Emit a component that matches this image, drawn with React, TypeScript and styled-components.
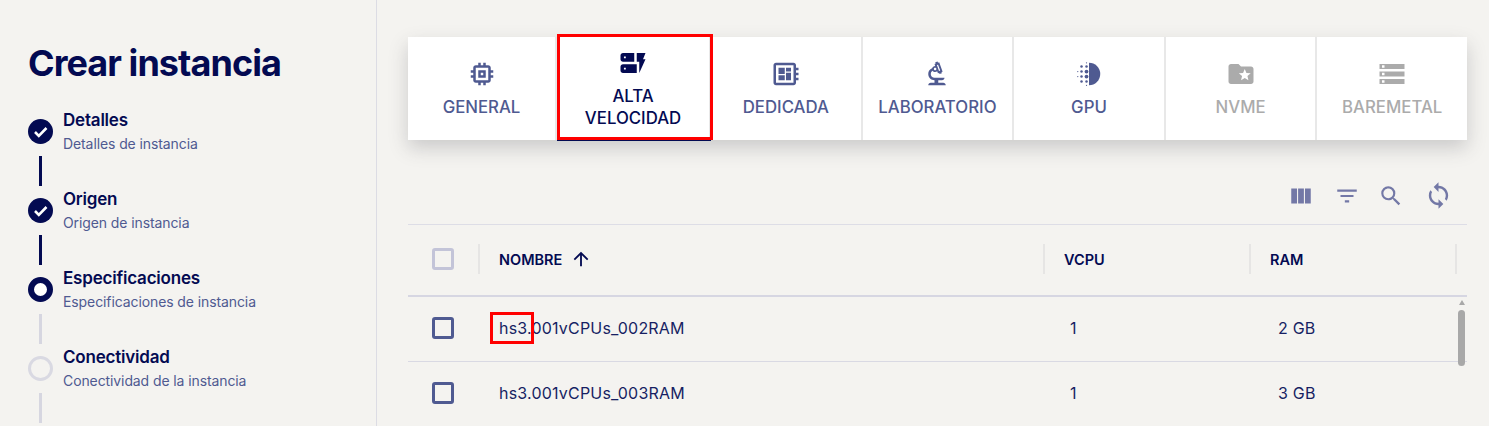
import React from 'react';
import styled, { createGlobalStyle } from 'styled-components';
import {
  MdOutlineMemory,
  MdDynamicForm,
  MdOutlineDeveloperBoard,
  MdOutlineBiotech,
  MdDeblur,
  MdFolderSpecial,
  MdStorage,
  MdViewColumn,
  MdFilterList,
  MdSearch,
  MdSync,
  MdArrowUpward,
} from 'react-icons/md';

const navy = '#030a52';
const muted = '#4f5a91';

const GlobalStyle = createGlobalStyle`
  html, body {
    margin: 0;
    height: 100%;
    overflow: hidden;
    background: #f4f3f0;
    font-family: Inter, "Liberation Sans", sans-serif;
  }
`;

const Page = styled.div`
  display: flex;
  height: 426px;
  overflow: hidden;
`;

const Sidebar = styled.aside`
  box-sizing: border-box;
  width: 377px;
  flex-shrink: 0;
  height: 426px;
  padding: 40px 0 0 28px;
  border-right: 1px solid #dcdce4;
`;

const Title = styled.h1`
  margin: 0 0 24px;
  font-size: 36px;
  line-height: 46px;
  font-weight: 700;
  letter-spacing: -0.95px;
  color: ${navy};
`;

const Steps = styled.div`
  display: flex;
  flex-direction: column;
`;

const Step = styled.div`
  display: grid;
  grid-template-columns: 25px 1fr;
  column-gap: 10px;
  height: 79px;
`;

const Marker = styled.div`
  display: flex;
  flex-direction: column;
  align-items: center;
  padding-top: 9px;
`;

const Circle = styled.div<{ $state: 'done' | 'active' | 'todo' }>`
  box-sizing: border-box;
  width: 25px;
  height: 25px;
  border-radius: 50%;
  display: flex;
  align-items: center;
  justify-content: center;
  background: ${p => (p.$state === 'done' ? navy : p.$state === 'active' ? '#fff' : 'transparent')};
  border: ${p =>
    p.$state === 'active' ? `6px solid ${navy}` : p.$state === 'todo' ? '3px solid #d9d9e2' : 'none'};
`;

const Connector = styled.div<{ $on: boolean }>`
  width: 3px;
  height: 30px;
  margin-top: 12px;
  background: ${p => (p.$on ? navy : '#d6d6e0')};
`;

const StepText = styled.div`
  display: flex;
  flex-direction: column;
`;

const StepName = styled.div`
  font-size: 17px;
  line-height: 20px;
  font-weight: 600;
  letter-spacing: -0.2px;
  color: ${navy};
`;

const StepHint = styled.div`
  margin-top: 4px;
  font-size: 14px;
  line-height: 20px;
  letter-spacing: -0.1px;
  color: ${muted};
`;

const Main = styled.main`
  flex: 1;
  min-width: 0;
  padding: 37px 22px 0 31px;
  position: relative;
`;

const TabBar = styled.div`
  display: flex;
  height: 103px;
  background: #fff;
  box-shadow: 0 8px 18px rgba(60, 60, 70, 0.22);
`;

const Tab = styled.div<{ $active?: boolean; $disabled?: boolean }>`
  flex: ${p => (p.$active ? '0 0 154px' : '1')};
  box-sizing: border-box;
  min-width: 0;
  display: flex;
  flex-direction: column;
  align-items: center;
  justify-content: center;
  gap: 7px;
  padding: ${p => (p.$active ? '0 20px' : '0')};
  text-align: center;
  font-size: 16.8px;
  font-weight: 500;
  line-height: 22px;
  color: ${p => (p.$active ? navy : p.$disabled ? '#ababab' : muted)};
  border-right: 2px solid #e8e8e8;
  box-shadow: ${p => (p.$active ? `0 1px 0 ${navy}` : 'none')};
  &:first-child {
    flex: 0 0 149px;
  }
  &:last-child {
    border-right: none;
  }
  svg {
    font-size: 30px;
    display: block;
  }
`;

const TableTools = styled.div`
  display: flex;
  justify-content: flex-end;
  align-items: center;
  gap: 20px;
  height: 84px;
  padding: 0 14px 0 0;
  border-bottom: 1px solid #dddde6;
  color: #7378a6;
  svg {
    font-size: 26px;
    display: block;
    margin-top: 27px;
  }
  svg:nth-child(3) {
    margin-left: -2px;
  }
  svg:last-child {
    font-size: 29px;
  }
`;

const Row = styled.div<{ $head?: boolean }>`
  box-sizing: border-box;
  display: grid;
  grid-template-columns: 70px 565px 206px 206px 1fr;
  align-items: center;
  height: ${p => (p.$head ? '72px' : '65px')};
  padding-bottom: 2px;
  border-bottom: ${p => (p.$head ? '2px solid #d6d6e2' : '1px solid #d9d9e3')};
`;

const Check = styled.div<{ $faded?: boolean }>`
  box-sizing: border-box;
  width: 22px;
  height: 22px;
  margin-left: 24px;
  border-radius: 3px;
  border: 3px solid ${p => (p.$faded ? '#c3c4d8' : muted)};
`;

const HeadCell = styled.div`
  box-sizing: border-box;
  height: 30px;
  display: flex;
  align-items: center;
  gap: 8px;
  padding-left: 19px;
  border-left: 2px solid #e6e5e4;
  font-size: 14.5px;
  font-weight: 600;
  color: ${navy};
  svg {
    font-size: 22px;
  }
`;

const EndCell = styled(HeadCell)`
  padding: 0;
`;

const Cell = styled.div<{ $pad: number }>`
  padding-left: ${p => p.$pad}px;
  font-size: 16px;
  letter-spacing: 0.2px;
  color: #171f63;
`;

const Scrollbar = styled.div`
  position: absolute;
  left: 1081px;
  top: 300px;
  width: 7px;
`;

const ScrollArrow = styled.div`
  width: 0;
  height: 0;
  margin: 0 auto 5px;
  border-left: 3.5px solid transparent;
  border-right: 3.5px solid transparent;
  border-bottom: 5px solid #a8a8a8;
`;

const ScrollThumb = styled.div`
  width: 7px;
  height: 56px;
  border-radius: 4px;
  background: #a8a8a8;
`;

const RedBox = styled.div<{ $x: number; $y: number; $w: number; $h: number }>`
  box-sizing: border-box;
  position: absolute;
  left: ${p => p.$x - 377}px;
  top: ${p => p.$y}px;
  width: ${p => p.$w}px;
  height: ${p => p.$h}px;
  border: 3.5px solid #f00;
`;

const CheckMark = () => (
  <svg width="25" height="25" viewBox="0 0 25 25" fill="none">
    <path d="M7 13l3.8 3.8L18.5 9" stroke="#fff" strokeWidth="2.6" />
  </svg>
);

const steps = [
  { name: 'Detalles', hint: 'Detalles de instancia', state: 'done' as const, line: true },
  { name: 'Origen', hint: 'Origen de instancia', state: 'done' as const, line: true },
  { name: 'Especificaciones', hint: 'Especificaciones de instancia', state: 'active' as const, line: false },
  { name: 'Conectividad', hint: 'Conectividad de la instancia', state: 'todo' as const, line: false },
];

const tabs = [
  { label: 'GENERAL', icon: <MdOutlineMemory /> },
  { label: 'ALTA VELOCIDAD', icon: <MdDynamicForm />, active: true },
  { label: 'DEDICADA', icon: <MdOutlineDeveloperBoard /> },
  { label: 'LABORATORIO', icon: <MdOutlineBiotech /> },
  { label: 'GPU', icon: <MdDeblur /> },
  { label: 'NVME', icon: <MdFolderSpecial />, disabled: true },
  { label: 'BAREMETAL', icon: <MdStorage />, disabled: true },
];

const rows = [
  { name: 'hs3.001vCPUs_002RAM', vcpu: '1', ram: '2 GB' },
  { name: 'hs3.001vCPUs_003RAM', vcpu: '1', ram: '3 GB' },
];

export default function App(): JSX.Element {
  return (
    <Page>
      <GlobalStyle />
      <Sidebar>
        <Title>Crear instancia</Title>
        <Steps>
          {steps.map(s => (
            <Step key={s.name}>
              <Marker>
                <Circle $state={s.state}>{s.state === 'done' && <CheckMark />}</Circle>
                <Connector $on={s.line} />
              </Marker>
              <StepText>
                <StepName>{s.name}</StepName>
                <StepHint>{s.hint}</StepHint>
              </StepText>
            </Step>
          ))}
        </Steps>
      </Sidebar>
      <Main>
        <TabBar>
          {tabs.map(t => (
            <Tab key={t.label} $active={t.active} $disabled={t.disabled}>
              {t.icon}
              <span>{t.label}</span>
            </Tab>
          ))}
        </TabBar>
        <TableTools>
          <MdViewColumn />
          <MdFilterList />
          <MdSearch />
          <MdSync />
        </TableTools>
        <Row $head>
          <Check $faded />
          <HeadCell>
            NOMBRE <MdArrowUpward />
          </HeadCell>
          <HeadCell>VCPU</HeadCell>
          <HeadCell>RAM</HeadCell>
          <EndCell />
        </Row>
        {rows.map(r => (
          <Row key={r.name}>
            <Check />
            <Cell $pad={21}>{r.name}</Cell>
            <Cell $pad={27}>{r.vcpu}</Cell>
            <Cell $pad={29}>{r.ram}</Cell>
          </Row>
        ))}
        <Scrollbar>
          <ScrollArrow />
          <ScrollThumb />
        </Scrollbar>
        <RedBox $x={557} $y={34} $w={156} $h={106} />
        <RedBox $x={490} $y={312} $w={44} $h={32} />
      </Main>
    </Page>
  );
}
